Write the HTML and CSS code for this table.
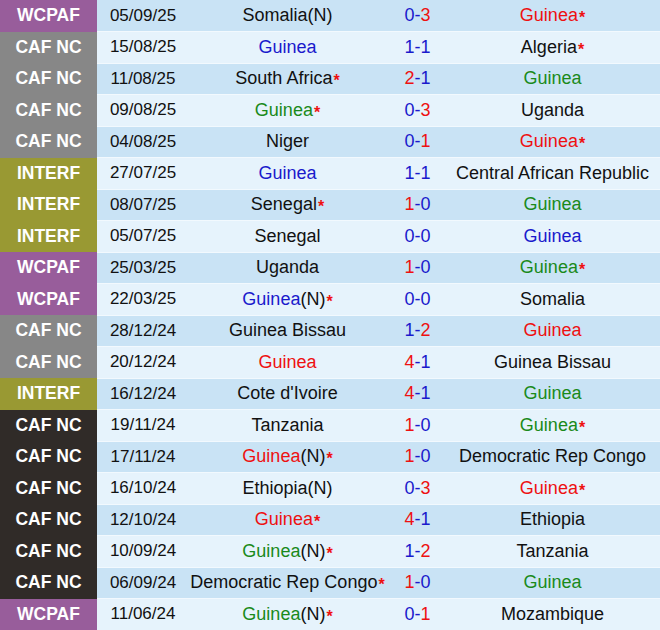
FILE: index.html
```html
<!DOCTYPE html>
<html>
<head>
<meta charset="utf-8">
<link rel="stylesheet" href="styles.css">
</head>
<body>
<table class="results">
<colgroup><col class="c-comp"><col class="c-date"><col class="c-home"><col class="c-score"><col class="c-away"></colgroup>
<tbody>
<tr><td class="comp wc">WCPAF</td><td class="date">05/09/25</td><td class="team">Somalia(N)</td><td class="score"><span>0</span>-<span class="w">3</span></td><td class="team"><span class="win">Guinea</span><sup>*</sup></td></tr>
<tr><td class="comp caf">CAF NC</td><td class="date">15/08/25</td><td class="team"><span class="draw">Guinea</span></td><td class="score"><span>1</span>-<span>1</span></td><td class="team">Algeria<sup>*</sup></td></tr>
<tr><td class="comp caf">CAF NC</td><td class="date">11/08/25</td><td class="team">South Africa<sup>*</sup></td><td class="score"><span class="w">2</span>-<span>1</span></td><td class="team"><span class="loss">Guinea</span></td></tr>
<tr><td class="comp caf">CAF NC</td><td class="date">09/08/25</td><td class="team"><span class="loss">Guinea</span><sup>*</sup></td><td class="score"><span>0</span>-<span class="w">3</span></td><td class="team">Uganda</td></tr>
<tr><td class="comp caf">CAF NC</td><td class="date">04/08/25</td><td class="team">Niger</td><td class="score"><span>0</span>-<span class="w">1</span></td><td class="team"><span class="win">Guinea</span><sup>*</sup></td></tr>
<tr><td class="comp inter">INTERF</td><td class="date">27/07/25</td><td class="team"><span class="draw">Guinea</span></td><td class="score"><span>1</span>-<span>1</span></td><td class="team">Central African Republic</td></tr>
<tr><td class="comp inter">INTERF</td><td class="date">08/07/25</td><td class="team">Senegal<sup>*</sup></td><td class="score"><span class="w">1</span>-<span>0</span></td><td class="team"><span class="loss">Guinea</span></td></tr>
<tr><td class="comp inter">INTERF</td><td class="date">05/07/25</td><td class="team">Senegal</td><td class="score"><span>0</span>-<span>0</span></td><td class="team"><span class="draw">Guinea</span></td></tr>
<tr><td class="comp wc">WCPAF</td><td class="date">25/03/25</td><td class="team">Uganda</td><td class="score"><span class="w">1</span>-<span>0</span></td><td class="team"><span class="loss">Guinea</span><sup>*</sup></td></tr>
<tr><td class="comp wc">WCPAF</td><td class="date">22/03/25</td><td class="team"><span class="draw">Guinea</span>(N)<sup>*</sup></td><td class="score"><span>0</span>-<span>0</span></td><td class="team">Somalia</td></tr>
<tr><td class="comp caf">CAF NC</td><td class="date">28/12/24</td><td class="team">Guinea Bissau</td><td class="score"><span>1</span>-<span class="w">2</span></td><td class="team"><span class="win">Guinea</span></td></tr>
<tr><td class="comp caf">CAF NC</td><td class="date">20/12/24</td><td class="team"><span class="win">Guinea</span></td><td class="score"><span class="w">4</span>-<span>1</span></td><td class="team">Guinea Bissau</td></tr>
<tr><td class="comp inter">INTERF</td><td class="date">16/12/24</td><td class="team">Cote d'Ivoire</td><td class="score"><span class="w">4</span>-<span>1</span></td><td class="team"><span class="loss">Guinea</span></td></tr>
<tr><td class="comp dark">CAF NC</td><td class="date">19/11/24</td><td class="team">Tanzania</td><td class="score"><span class="w">1</span>-<span>0</span></td><td class="team"><span class="loss">Guinea</span><sup>*</sup></td></tr>
<tr><td class="comp dark">CAF NC</td><td class="date">17/11/24</td><td class="team"><span class="win">Guinea</span>(N)<sup>*</sup></td><td class="score"><span class="w">1</span>-<span>0</span></td><td class="team">Democratic Rep Congo</td></tr>
<tr><td class="comp dark">CAF NC</td><td class="date">16/10/24</td><td class="team">Ethiopia(N)</td><td class="score"><span>0</span>-<span class="w">3</span></td><td class="team"><span class="win">Guinea</span><sup>*</sup></td></tr>
<tr><td class="comp dark">CAF NC</td><td class="date">12/10/24</td><td class="team"><span class="win">Guinea</span><sup>*</sup></td><td class="score"><span class="w">4</span>-<span>1</span></td><td class="team">Ethiopia</td></tr>
<tr><td class="comp dark">CAF NC</td><td class="date">10/09/24</td><td class="team"><span class="loss">Guinea</span>(N)<sup>*</sup></td><td class="score"><span>1</span>-<span class="w">2</span></td><td class="team">Tanzania</td></tr>
<tr><td class="comp dark">CAF NC</td><td class="date">06/09/24</td><td class="team">Democratic Rep Congo<sup>*</sup></td><td class="score"><span class="w">1</span>-<span>0</span></td><td class="team"><span class="loss">Guinea</span></td></tr>
<tr><td class="comp wc">WCPAF</td><td class="date">11/06/24</td><td class="team"><span class="loss">Guinea</span>(N)<sup>*</sup></td><td class="score"><span>0</span>-<span class="w">1</span></td><td class="team">Mozambique</td></tr>
</tbody>
</table>
</body>
</html>
```
FILE: styles.css
```css
html, body {
  margin: 0;
  padding: 0;
  background: #ffffff;
}
.results {
  width: 660px;
  border-collapse: collapse;
  table-layout: fixed;
  font-family: "Liberation Sans", Arial, sans-serif;
  font-size: 18px;
  color: #111111;
}
.c-comp { width: 97px; }
.c-date { width: 88px; }
.c-home { width: 205px; }
.c-score { width: 55px; }
.c-away { width: 215px; }
.results tr { height: 31.5px; }
.results td {
  padding: 0;
  text-align: center;
  white-space: nowrap;
  vertical-align: middle;
  border-bottom: 1px solid #f2f9fe;
}
.results tr:nth-child(odd) td { background: #c9e3f5; }
.results tr:nth-child(even) td { background: #e6f3fc; }
.results tr td.comp {
  color: #ffffff;
  font-weight: bold;
  font-size: 17.5px;
  border-bottom: none;
}
.results tr td.wc { background: #985d9b; }
.results tr td.caf { background: #878787; }
.results tr td.inter { background: #999933; }
.results tr td.dark { background: #302b28; }
.results td.date { padding-left: 4px; font-size: 17px; }
sup {
  color: #ee1111;
  font-size: 16px;
  font-weight: bold;
  vertical-align: top;
  line-height: 1;
  position: relative;
  top: 5px;
  margin-left: 1px;
}
.score { color: #1a1acc; }
.score .w { color: #ee1111; }
.win { color: #ee1111; }
.draw { color: #1a1acc; }
.loss { color: #1a8a1a; }
```
